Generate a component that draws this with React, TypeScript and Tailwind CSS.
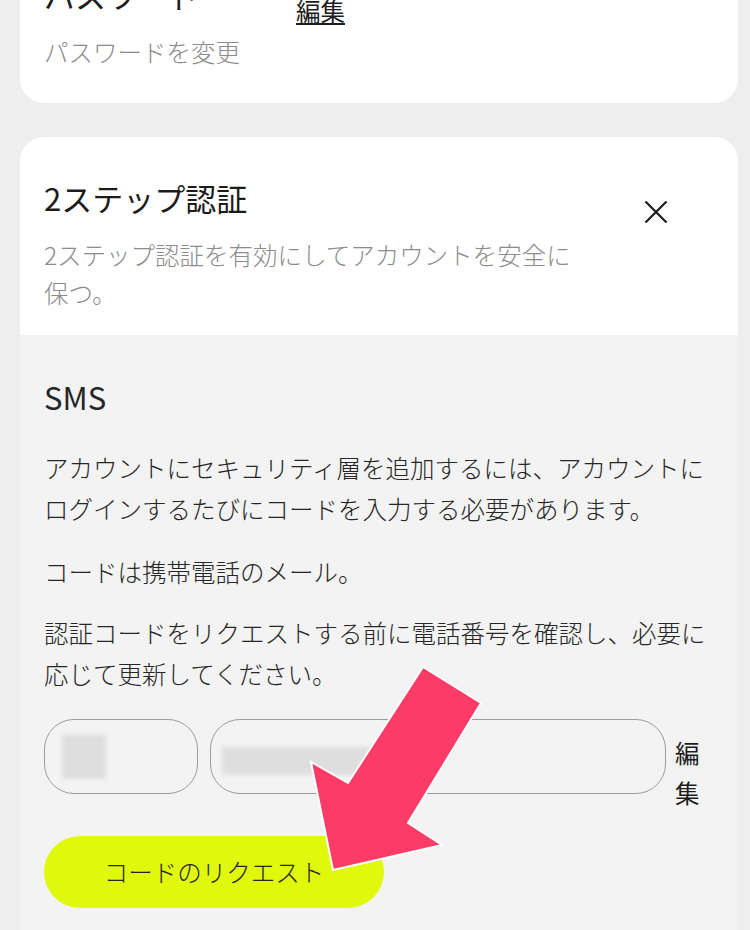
import React from "react";

const font = {
  fontFamily: '"Noto Sans CJK JP", "Noto Sans", sans-serif',
};

// Outlined pill input; the value is masked with a blurred block
const MaskedField: React.FC<{ width: string; mask: string }> = ({ width, mask }) => {
  return (
    <div
      className={`${width} h-[75px] shrink-0 rounded-[30px] border-[1.5px] border-[#9c9c9c] flex items-center overflow-hidden`}
    >
      <div className={`${mask} bg-[#dedede] blur-[2px]`} />
    </div>
  );
};

const App: React.FC = () => {
  return (
    <div className="relative h-[930px] w-[750px] overflow-hidden bg-[#eeeeee] font-light" style={font}>
      <div className="-mt-[68px] flex flex-col gap-[34px] pl-[20px] pr-[12px]">
        {/* password card */}
        <div className="rounded-[24px] bg-white px-[24px] pt-[41px] pb-[31px]">
          <div className="flex items-start">
            <h2 className="w-[252px] text-[31px] font-normal leading-[44px] text-[#1c1c1c]">パスワード</h2>
            <a className="mt-[21px] text-[24.5px] font-normal leading-[34px] text-[#1c1c1c] underline underline-offset-2">
              編集
            </a>
          </div>
          <p className="mt-[4px] text-[24.5px] leading-[40px] text-[#8c8c8c]">パスワードを変更</p>
        </div>

        {/* two-step verification card */}
        <div className="overflow-hidden rounded-t-[24px] bg-[#f3f3f3]">
          <div className="flex items-start justify-between bg-white pl-[24px] pr-[70px] pt-[39px] pb-[23px]">
            <div className="w-[540px]">
              <h2 className="text-[31px] font-normal leading-[44px] text-[#1c1c1c]">2ステップ認証</h2>
              <p className="mt-[16px] text-[24.5px] leading-[38px] text-[#8c8c8c]">
                2ステップ認証を有効にしてアカウントを安全に保つ。
              </p>
            </div>
            <svg className="mt-[24px] h-[24px] w-[24px]" viewBox="0 0 24 24" fill="none">
              <path d="M1.5 1.5 22.5 22.5M22.5 1.5 1.5 22.5" stroke="#1c1c1c" strokeWidth="2.2" />
            </svg>
          </div>

          <div className="px-[24px] pt-[40px] pb-[60px] text-[#262626]">
            <h3 className="text-[31px] font-normal leading-[44px]">SMS</h3>
            <p className="mt-[28px] text-[24.5px] leading-[41px]">
              アカウントにセキュリティ層を追加するには、アカウントにログインするたびにコードを入力する必要があります。
            </p>
            <p className="mt-[22px] text-[24.5px] leading-[41px]">コードは携帯電話のメール。</p>
            <p className="mt-[20px] text-[24.5px] leading-[41px]">
              認証コードをリクエストする前に電話番号を確認し、必要に応じて更新してください。
            </p>

            <div className="mt-[25px] flex h-[75px] items-start">
              <MaskedField width="w-[154px]" mask="ml-[17px] h-[44px] w-[44px]" />
              <div className="w-[12px] shrink-0" />
              <MaskedField width="w-[456px]" mask="ml-[11px] mt-[8px] h-[28px] w-[150px]" />
              <span className="ml-[9px] mt-[14px] w-[26px] text-[24.5px] font-normal leading-[40px] text-[#1c1c1c]">
                編集
              </span>
            </div>

            <button className="mt-[42px] flex h-[72px] w-[340px] items-center justify-center rounded-full bg-[#e0f80c] text-[24.5px] text-[#262626]">
              コードのリクエスト
            </button>
          </div>
        </div>
      </div>

      {/* callout arrow */}
      <svg className="pointer-events-none absolute left-0 top-0 h-[930px] w-[750px]" viewBox="0 0 750 930">
        <polygon
          points="423,667 481,703 408,823 442,845 333,870 311,762 348,783"
          fill="#fc3b66"
          stroke="#ffffff"
          strokeWidth="2"
          strokeLinejoin="miter"
        />
      </svg>
    </div>
  );
};

export default App;
